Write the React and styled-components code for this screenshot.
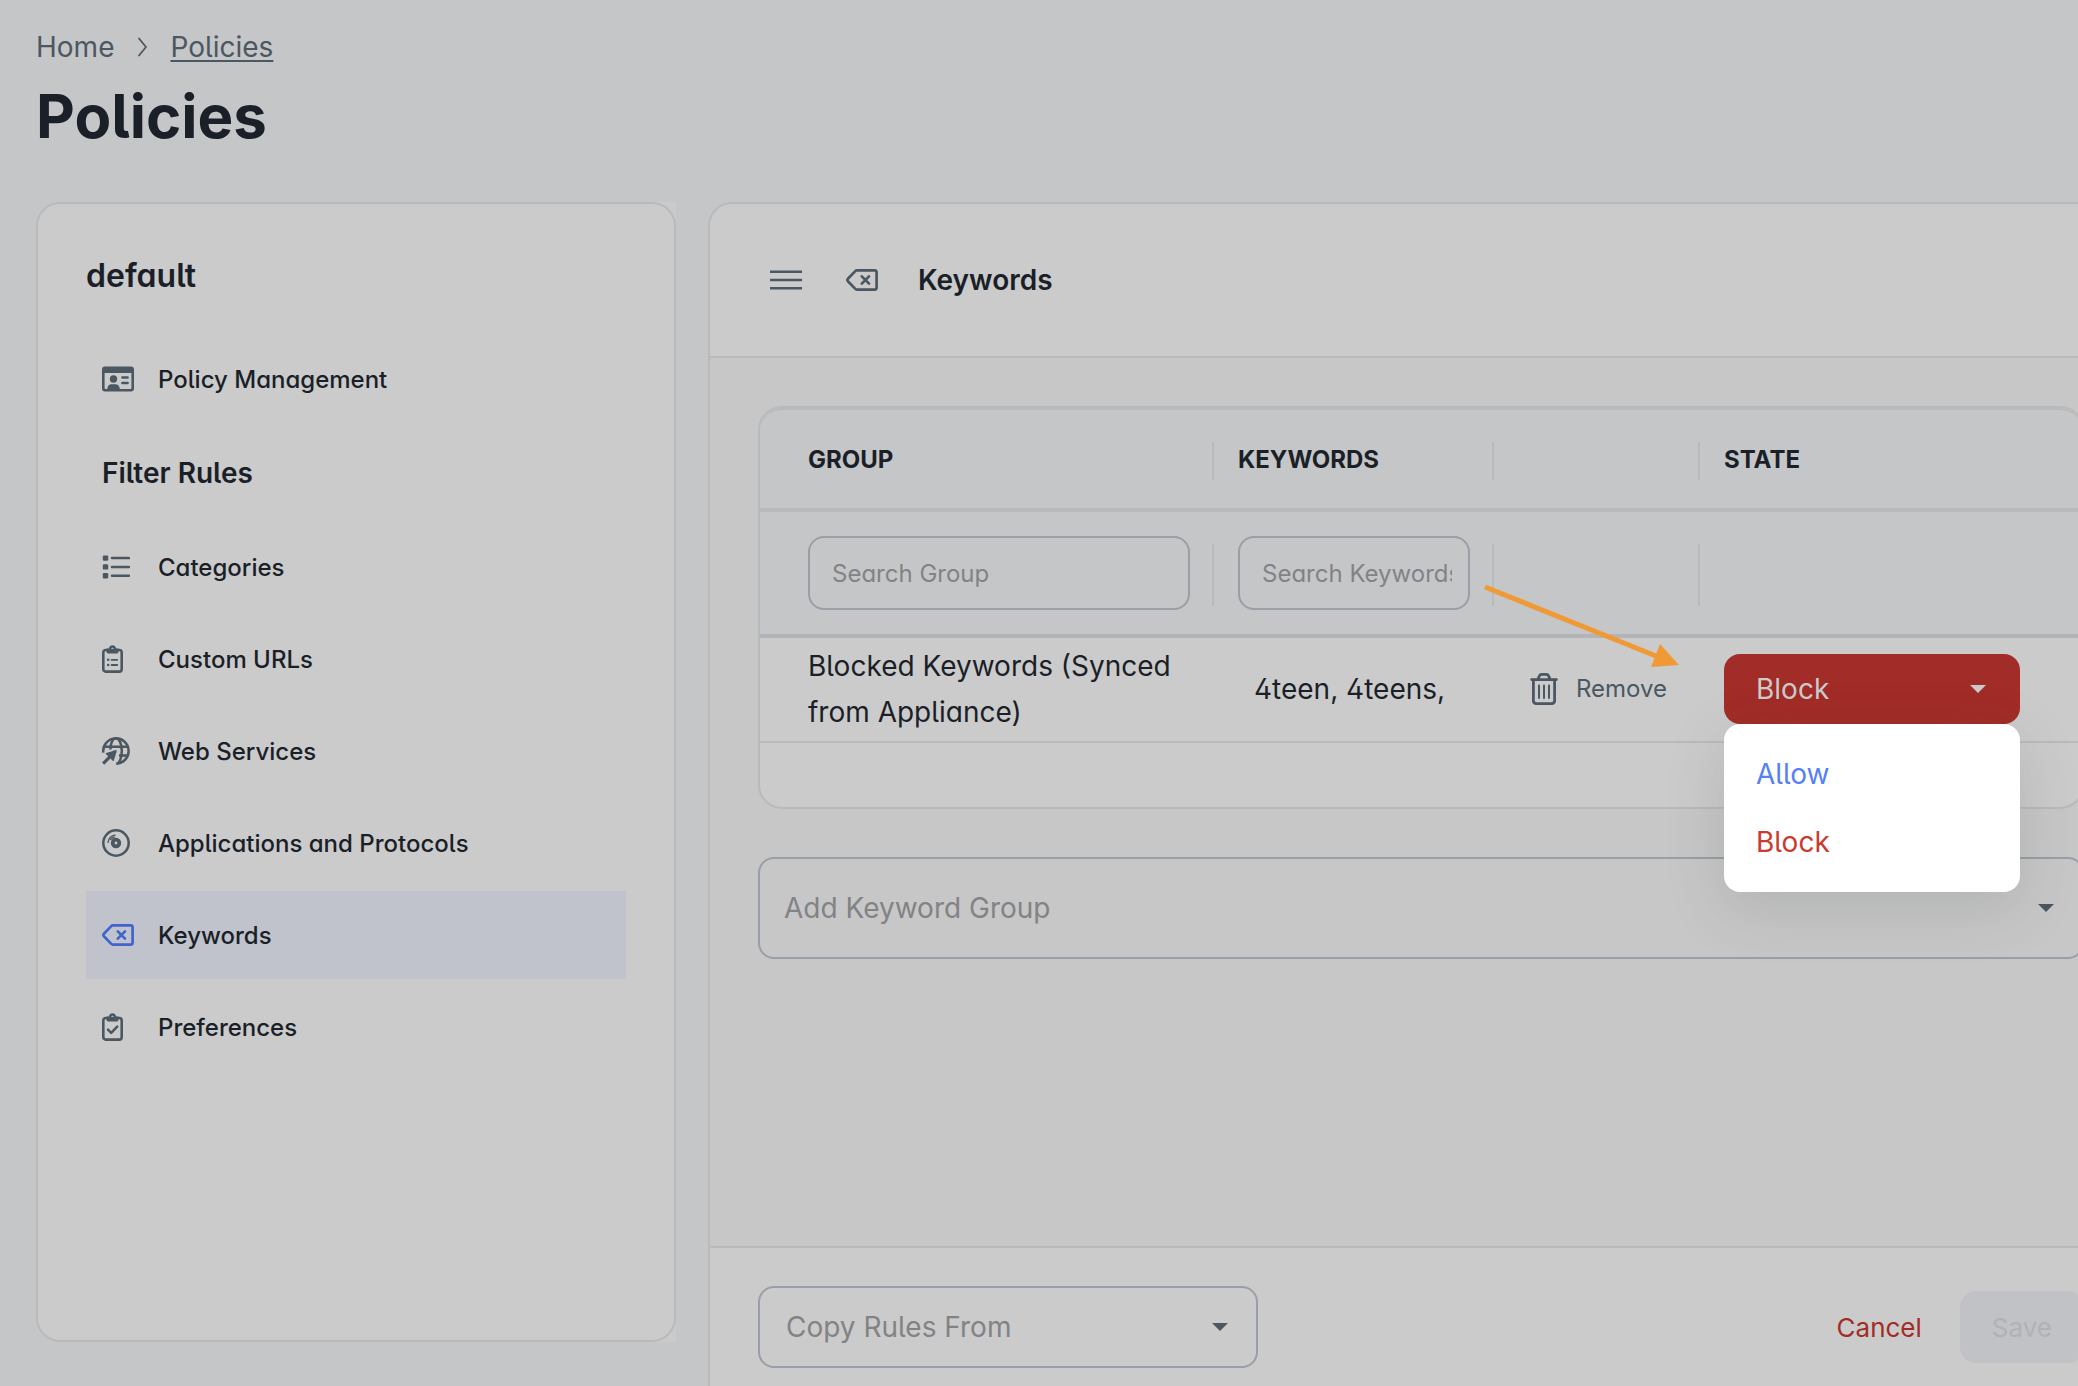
import React, { useState } from 'react'
import styled, { createGlobalStyle } from 'styled-components'

const filterRules = [
  { name: 'Categories', icon: <ListIcon /> },
  { name: 'Custom URLs', icon: <ClipboardListIcon /> },
  { name: 'Web Services', icon: <GlobeIcon /> },
  { name: 'Applications and Protocols', icon: <DiscIcon /> },
  { name: 'Keywords', icon: <DeleteIcon /> },
  { name: 'Preferences', icon: <ClipboardCheckIcon /> },
]

export default function App() {
  const [selected, setSelected] = useState('Keywords')

  return (
    <Page>
      <GlobalStyle />
      <Breadcrumb aria-label="Breadcrumb">
        <Crumb href="#home">Home</Crumb>
        <ChevronIcon />
        <Crumb href="#policies" $current>
          Policies
        </Crumb>
      </Breadcrumb>
      <Title>Policies</Title>
      <Layout>
        <SidebarArea>
          <Sidebar>
            <PolicyName>default</PolicyName>
            <NavList>
              <NavItem href="#management">
                <IconSlot>
                  <CardIcon />
                </IconSlot>
                Policy Management
              </NavItem>
              <NavHeading>Filter Rules</NavHeading>
              {filterRules.map(({ name, icon }) => (
                <NavItem
                  key={name}
                  href="#rules"
                  $active={selected === name}
                  onClick={() => setSelected(name)}
                >
                  <IconSlot>{icon}</IconSlot>
                  {name}
                </NavItem>
              ))}
            </NavList>
          </Sidebar>
        </SidebarArea>
        <Panel>
          <PanelHeader>
            <MenuButton aria-label="Toggle menu">
              <MenuIcon />
            </MenuButton>
            <DeleteIcon />
            <PanelTitle>Keywords</PanelTitle>
          </PanelHeader>
          <PanelBody>
            <KeywordTable />
            <SelectBox>
              <Select aria-label="Add Keyword Group" $height={102} $indent={24}>
                <option>Add Keyword Group</option>
              </Select>
              <CaretIcon />
            </SelectBox>
          </PanelBody>
          <PanelFooter>
            <SelectBox $width={500}>
              <Select aria-label="Copy Rules From" $height={82} $indent={26}>
                <option>Copy Rules From</option>
              </Select>
              <CaretIcon />
            </SelectBox>
            <Actions>
              <CancelButton>Cancel</CancelButton>
              <SaveButton disabled>Save</SaveButton>
            </Actions>
          </PanelFooter>
        </Panel>
      </Layout>
    </Page>
  )
}

function KeywordTable() {
  return (
    <TableFrame>
      <Table>
        <colgroup>
          <col width="454" />
          <col width="280" />
          <col width="206" />
          <col />
        </colgroup>
        <thead>
          <tr>
            <HeadCell>
              <Divided $height={38}>GROUP</Divided>
            </HeadCell>
            <HeadCell>
              <Divided $height={38}>KEYWORDS</Divided>
            </HeadCell>
            <HeadCell>
              <Divided $height={38} />
            </HeadCell>
            <HeadCell>
              <Divided $height={38} $last>
                STATE
              </Divided>
            </HeadCell>
          </tr>
          <tr>
            <FilterCell>
              <Divided $height={62}>
                <SearchInput aria-label="Search Group" placeholder="Search Group" />
              </Divided>
            </FilterCell>
            <FilterCell>
              <Divided $height={62}>
                <SearchInput aria-label="Search Keywords" placeholder="Search Keywords" />
              </Divided>
            </FilterCell>
            <FilterCell>
              <Divided $height={62} />
            </FilterCell>
            <FilterCell />
          </tr>
        </thead>
        <tbody>
          <tr>
            <Cell>Blocked Keywords (Synced from Appliance)</Cell>
            <KeywordCell>4teen, 4teens,</KeywordCell>
            <Cell>
              <RemoveButton>
                <TrashIcon />
                Remove
              </RemoveButton>
            </Cell>
            <Cell>
              <StateDropdown />
            </Cell>
          </tr>
        </tbody>
      </Table>
    </TableFrame>
  )
}

function StateDropdown() {
  const [state, setState] = useState('Block')
  const [open, setOpen] = useState(true)

  return (
    <Dropdown>
      <StateButton
        aria-label="State"
        aria-haspopup="listbox"
        aria-expanded={open}
        $state={state}
        onClick={() => setOpen(!open)}
      >
        {state}
        <CaretIcon />
      </StateButton>
      {open && (
        <Menu role="listbox" aria-label="State">
          {['Allow', 'Block'].map((option) => (
            <MenuOption
              key={option}
              role="option"
              aria-selected={state === option}
              $option={option}
              onClick={() => choose(option)}
            >
              {option}
            </MenuOption>
          ))}
        </Menu>
      )}
      <Pointer width="200" height="90" viewBox="0 0 200 90" aria-hidden="true">
        <path d="M5 7 L176 76" stroke="#f09a37" strokeWidth="5" fill="none" />
        <path d="M199 85 L180 64 L171 87 Z" fill="#f09a37" />
      </Pointer>
    </Dropdown>
  )

  function choose(option) {
    setState(option)
    setOpen(false)
  }
}

function CaretIcon() {
  return (
    <svg width="16" height="8" viewBox="0 0 16 8" fill="currentColor" aria-hidden="true">
      <path d="M0 0 H16 L8 8 Z" />
    </svg>
  )
}

function ChevronIcon() {
  return (
    <svg width="12" height="20" viewBox="0 0 12 20" fill="none" stroke="#4b5761" strokeWidth="1.8">
      <path d="M3 1.5 L10 10 L3 18.5" strokeLinecap="round" strokeLinejoin="round" />
    </svg>
  )
}

function MenuIcon() {
  return (
    <svg width="32" height="20" viewBox="0 0 32 20" stroke="currentColor" strokeWidth="2.6">
      <path d="M0 1.8 H32 M0 10 H32 M0 18.2 H32" />
    </svg>
  )
}

function DeleteIcon() {
  return (
    <svg
      width="32"
      height="22"
      viewBox="0 0 32 22"
      fill="none"
      stroke="currentColor"
      strokeWidth="2.7"
      strokeLinecap="round"
      strokeLinejoin="round"
    >
      <path d="M10.8 1.4 H28.6 Q30.6 1.4 30.6 3.4 V18.6 Q30.6 20.6 28.6 20.6 H10.8 Q10 20.6 9.3 19.9 L1.9 12.2 Q0.8 11 1.9 9.8 L9.3 2.1 Q10 1.4 10.8 1.4 Z" />
      <path d="M15.8 7.4 L23 14.6 M23 7.4 L15.8 14.6" />
    </svg>
  )
}

function CardIcon() {
  return (
    <svg width="32" height="26" viewBox="0 0 32 26" fill="currentColor">
      <path d="M3 0.5 H29 Q32 0.5 32 3.5 V22.5 Q32 25.5 29 25.5 H3 Q0 25.5 0 22.5 V3.5 Q0 0.5 3 0.5 Z M2.6 7 V22.1 Q2.6 23 3.5 23 H5.3 Q5.6 18.2 9.5 18.2 H13.5 Q17.4 18.2 17.8 23 H28.5 Q29.4 23 29.4 22.1 V7 Z" fillRule="evenodd" />
      <circle cx="11.5" cy="13" r="3.7" />
      <path d="M20.4 11.6 H25.6 M20.4 17 H25.6" stroke="currentColor" strokeWidth="2.5" strokeLinecap="round" />
    </svg>
  )
}

function ListIcon() {
  return (
    <svg width="28" height="24" viewBox="0 0 28 24" fill="currentColor">
      <rect x="0.8" y="0.4" width="5.4" height="5.4" rx="1.2" />
      <rect x="0.8" y="9.2" width="5.4" height="5.4" rx="1.2" />
      <rect x="0.8" y="18" width="5.4" height="5.4" rx="1.2" />
      <path
        d="M10 3.1 H27 M10 11.9 H27 M10 20.7 H27"
        stroke="currentColor"
        strokeWidth="2.5"
        strokeLinecap="round"
      />
    </svg>
  )
}

function Clipboard({ children }) {
  return (
    <svg width="21" height="28" viewBox="0 0 21 28" fill="none" stroke="currentColor">
      <rect x="1.3" y="5" width="18.4" height="21.6" rx="2.4" strokeWidth="2.6" />
      <path
        d="M6.8 3.6 C7.2 1.4 8.6 0.2 10.5 0.2 C12.4 0.2 13.8 1.4 14.2 3.6 H16.6 V6 Q16.6 8.6 14 8.6 H7 Q4.4 8.6 4.4 6 V3.6 Z M10.5 2.8 A1.3 1.3 0 1 0 10.5 5.4 A1.3 1.3 0 1 0 10.5 2.8 Z"
        fill="currentColor"
        fillRule="evenodd"
        stroke="none"
      />
      {children}
    </svg>
  )
}

function ClipboardListIcon() {
  return (
    <Clipboard>
      <path d="M9.6 14.8 H15.2 M9.6 20 H15.2" strokeWidth="1.8" strokeLinecap="round" />
      <circle cx="6.2" cy="14.8" r="1.3" fill="currentColor" stroke="none" />
      <circle cx="6.2" cy="20" r="1.3" fill="currentColor" stroke="none" />
    </Clipboard>
  )
}

function ClipboardCheckIcon() {
  return (
    <Clipboard>
      <path d="M6 16.6 L9.2 19.8 L15.2 13.6" strokeWidth="2.5" strokeLinecap="round" strokeLinejoin="round" />
    </Clipboard>
  )
}

function GlobeIcon() {
  return (
    <svg width="28" height="28" viewBox="0 0 28 28" fill="none" stroke="currentColor" strokeWidth="2.5">
      <path d="M1.3 15.6 A12.7 12.7 0 1 1 14.6 26.7" />
      <path d="M8.4 12.6 C8.4 6 10.8 1.3 14 1.3 C17.2 1.3 19.8 6.6 19.8 14 C19.8 21 17.4 26.7 14.4 26.7" />
      <path d="M2 9.8 H26 M17 18.4 H26" />
      <path d="M13.4 14.2 L1.2 26.6" strokeWidth="3.2" />
      <path
        d="M14 13.8 L11.2 23.2 L4.4 16.6 Z"
        fill="currentColor"
        strokeWidth="1.4"
        strokeLinejoin="round"
      />
    </svg>
  )
}

function DiscIcon() {
  return (
    <svg width="28" height="28" viewBox="0 0 28 28" fill="none" stroke="currentColor">
      <circle cx="14" cy="14" r="12.7" strokeWidth="2.5" />
      <circle cx="14" cy="14" r="3.3" strokeWidth="3.8" />
      <path
        d="M6 13.4 A8 8 0 0 1 13 6.2 M8.6 10.4 Q10 8.9 12.2 8.5"
        strokeWidth="1.4"
        strokeLinecap="round"
      />
    </svg>
  )
}

function TrashIcon() {
  return (
    <svg
      width="28"
      height="32"
      viewBox="0 0 28 32"
      fill="none"
      stroke="currentColor"
      strokeWidth="2.8"
      strokeLinecap="round"
      strokeLinejoin="round"
    >
      <path d="M1.6 6.6 H26.4 M8 6 L9.6 2.6 Q10.2 1.4 11.4 1.4 H16.6 Q17.8 1.4 18.4 2.6 L20 6" />
      <path d="M3.4 7 V27.6 Q3.4 30.6 6.4 30.6 H21.6 Q24.6 30.6 24.6 27.6 V7" />
      <path d="M9 12.4 V25 M14 12.4 V25 M19 12.4 V25" strokeWidth="2" />
    </svg>
  )
}

const GlobalStyle = createGlobalStyle`
  *, *::before, *::after {
    box-sizing: border-box;
  }
  :root {
    --text: #1a1f28;
    --icon: #4b5761;
    --placeholder: #818386;
    --page: #c5c6c8;
    --paper: #cbcbcb;
    --body: #c7c7c7;
    --line: #b9babb;
    --field: #999fa6;
    --danger: #a22c27;
  }
  body {
    margin: 0;
    background: var(--page);
    color: var(--text);
    font-family: Inter, sans-serif;
    font-size: 28px;
    font-feature-settings: 'cv02', 'cv05', 'cv11';
  }
  button, input, select {
    font-family: inherit;
  }
  svg {
    flex-shrink: 0;
  }
`

const Page = styled.div`
  height: 100vh;
  padding: 30px 36px 0;
  overflow: hidden;
`

const Breadcrumb = styled.nav`
  display: flex;
  align-items: center;
  gap: 22px;
  line-height: 34px;
`

const Crumb = styled.a`
  color: var(--icon);
  text-decoration: ${(props) => (props.$current ? 'underline' : 'none')};
  text-decoration-thickness: 2px;
  text-underline-offset: 3px;
`

const Title = styled.h1`
  margin: 16px 0 50px;
  font-size: 60px;
  font-weight: 700;
  line-height: 72px;
`

/* the panel runs past the right edge of the window */
const Layout = styled.div`
  display: grid;
  grid-template-columns: 640px 1fr;
  align-items: start;
  gap: 32px;
  margin-right: -92px;
`

const SidebarArea = styled.div`
  background: #cacaca;
  border-radius: 24px 0 0 24px;
`

const Sidebar = styled.aside`
  height: calc(100vh - 246px);
  padding: 48px;
  background: var(--paper);
  border: 2px solid var(--line);
  border-radius: 24px;
`

const PolicyName = styled.h2`
  margin: 0 0 35px;
  font-size: 32px;
  font-weight: 600;
  line-height: 48px;
`

const NavList = styled.nav`
  display: flex;
  flex-direction: column;
  gap: 4px;
`

const NavItem = styled.a`
  display: flex;
  align-items: center;
  gap: 24px;
  height: 88px;
  padding: 0 16px;
  background: ${(props) => (props.$active ? '#c0c3cc' : 'transparent')};
  color: var(--text);
  font-size: 24px;
  font-weight: 500;
  text-decoration: none;
  svg {
    color: ${(props) => (props.$active ? '#4064cd' : 'var(--icon)')};
  }
`

const IconSlot = styled.span`
  display: flex;
  width: 32px;
`

const NavHeading = styled.h3`
  margin: 0;
  padding: 0 16px;
  font-size: 28px;
  font-weight: 600;
  line-height: 92px;
`

const Panel = styled.main`
  display: flex;
  flex-direction: column;
  height: calc(100vh - 180px);
  background: var(--paper);
  border: 2px solid var(--line);
  border-radius: 24px;
`

const PanelHeader = styled.header`
  display: flex;
  align-items: center;
  height: 154px;
  padding: 0 48px;
  border-bottom: 2px solid var(--line);
  color: var(--icon);
`

const MenuButton = styled.button`
  display: flex;
  margin-right: 32px;
  padding: 12px;
  border: 0;
  background: none;
  color: inherit;
`

const PanelTitle = styled.h2`
  margin: 0 0 0 40px;
  color: var(--text);
  font-size: 28px;
  font-weight: 600;
`

const PanelBody = styled.div`
  display: flex;
  flex: 1;
  flex-direction: column;
  gap: 48px;
  padding: 48px;
  background: var(--body);
`

const TableFrame = styled.div`
  padding-bottom: 64px;
  background: var(--paper);
  border: 2px solid var(--line);
  border-radius: 24px;
`

const Table = styled.table`
  width: 100%;
  table-layout: fixed;
  border-collapse: separate;
  border-spacing: 0;
`

const HeadCell = styled.th`
  height: 104px;
  padding: 4px 0 0 24px;
  background: var(--page);
  border-top: 2px solid var(--line);
  border-bottom: 4px solid var(--line);
  font-size: 24px;
  font-weight: 700;
  text-align: left;
  &:first-child {
    padding-left: 48px;
    border-top-left-radius: 22px;
  }
  &:last-child {
    border-top-right-radius: 22px;
  }
`

const FilterCell = styled.td`
  height: 126px;
  padding: 4px 0 0 24px;
  background: var(--page);
  border-bottom: 4px solid #b2b4b9;
  &:first-child {
    padding-left: 48px;
  }
`

/* cell content with the short rule that separates it from the next column */
const Divided = styled.div`
  display: flex;
  align-items: center;
  height: ${(props) => props.$height}px;
  padding: 0 22px 4px 0;
  border-right: ${(props) => (props.$last ? '0' : '2px solid var(--line)')};
`

const SearchInput = styled.input`
  width: 100%;
  height: 74px;
  padding: 0 16px 0 22px;
  border: 2px solid var(--field);
  border-radius: 16px;
  background: transparent;
  color: var(--text);
  font-size: 24px;
  font-feature-settings: inherit;
  &::placeholder {
    color: var(--placeholder);
  }
`

const Cell = styled.td`
  height: 105px;
  padding: 0 24px 2px;
  border-bottom: 2px solid var(--line);
  line-height: 46px;
  &:first-child {
    padding-left: 48px;
  }
`

const KeywordCell = styled(Cell)`
  padding: 0 0 2px 40px;
  white-space: nowrap;
`

const RemoveButton = styled.button`
  display: flex;
  align-items: center;
  gap: 18px;
  padding: 12px;
  border: 0;
  background: none;
  color: var(--icon);
  font-size: 24px;
`

const Dropdown = styled.div`
  position: relative;
  width: 296px;
`

const StateButton = styled.button`
  display: flex;
  align-items: center;
  justify-content: space-between;
  width: 100%;
  height: 70px;
  padding: 0 34px 0 32px;
  border: 0;
  border-radius: 16px;
  background: ${(props) => (props.$state === 'Block' ? 'var(--danger)' : '#4064cd')};
  color: var(--paper);
  font-size: 28px;
`

const Menu = styled.div`
  position: absolute;
  top: 100%;
  left: 0;
  z-index: 1;
  width: 100%;
  padding: 16px 0;
  background: #fff;
  border-radius: 16px;
  box-shadow: 0 16px 60px rgba(60, 70, 70, 0.16);
`

const MenuOption = styled.button`
  display: block;
  width: 100%;
  height: 68px;
  padding: 0 32px;
  border: 0;
  background: none;
  color: ${(props) => (props.$option === 'Block' ? '#cb3930' : '#5580f7')};
  font-size: 28px;
  font-feature-settings: inherit;
  text-align: left;
`

const Pointer = styled.svg`
  position: absolute;
  top: -74px;
  left: -244px;
  pointer-events: none;
`

const SelectBox = styled.div`
  display: grid;
  align-items: center;
  width: ${(props) => (props.$width ? `${props.$width}px` : '100%')};
  color: var(--icon);
  > * {
    grid-area: 1 / 1;
  }
  svg {
    justify-self: end;
    margin-right: 30px;
    pointer-events: none;
  }
`

const Select = styled.select`
  width: 100%;
  height: ${(props) => props.$height}px;
  padding: 0 60px 0 ${(props) => props.$indent}px;
  appearance: none;
  border: 2px solid var(--field);
  border-radius: 16px;
  background: transparent;
  color: var(--placeholder);
  font-size: 28px;
  font-feature-settings: inherit;
`

const PanelFooter = styled.footer`
  display: flex;
  align-items: center;
  justify-content: space-between;
  height: 160px;
  padding: 0 48px;
  border-top: 2px solid var(--line);
`

const Actions = styled.div`
  display: flex;
  gap: 6px;
`

const Button = styled.button`
  height: 72px;
  padding: 0 32px;
  border: 0;
  border-radius: 16px;
  font-size: 26px;
`

const CancelButton = styled(Button)`
  background: none;
  color: var(--danger);
`

const SaveButton = styled(Button)`
  background: #c1c2c5;
  color: #b1b2b4;
`
